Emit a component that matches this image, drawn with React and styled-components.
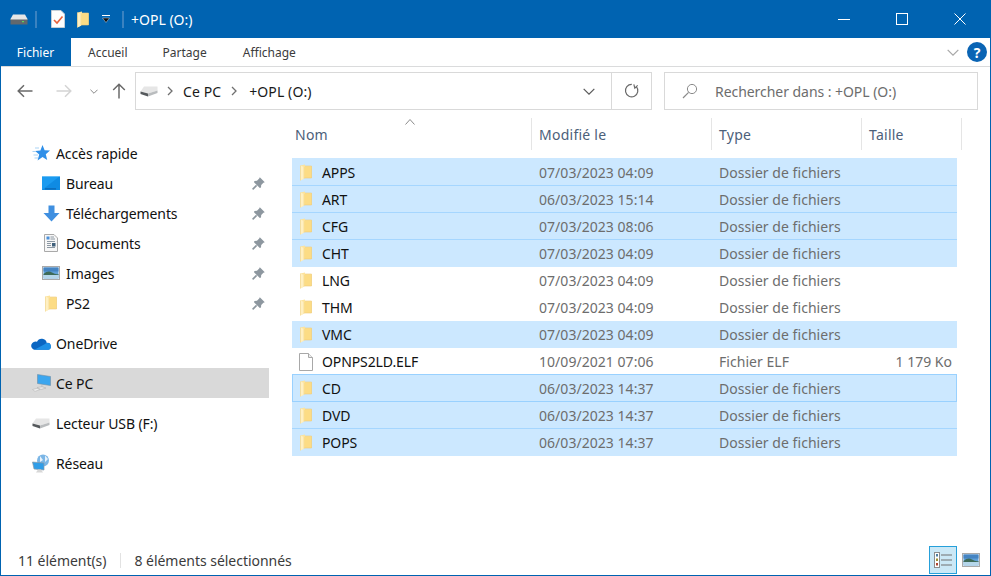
import React from "react";
import styled, { createGlobalStyle } from "styled-components";

const Global = createGlobalStyle`
  html, body { margin: 0; padding: 0; background: #fff; }
  * { box-sizing: border-box; }
`;

const FONT = `"Noto Sans", "Open Sans", sans-serif`;

/* ---------- icons ---------- */
const Folder = () => (
  <svg width="12" height="17" viewBox="0 0 12 17">
    <path d="M0.5 1.5 L5 0.5 V2 H11.5 V14 H4.5 L0.5 16.5 Z" fill="#fde39c" />
    <path d="M4.5 2.5 H11.5 V14 H4.5 Z" fill="#fcdc85" />
    <path d="M0.5 1.5 L4 3 V14.8 L0.5 16.5 Z" fill="#fff0c2" />
    <path d="M4 3 V14.8" stroke="#f3d587" strokeWidth="0.7" />
    <path d="M0.5 1.5 V16.5" stroke="#f0d48c" strokeWidth="0.6" />
    <path d="M5 2 H11.5 V14 H4.5" fill="none" stroke="#eecb78" strokeWidth="0.6" />
  </svg>
);

const Drive = () => (
  <svg width="18" height="11" viewBox="0 0 18 11">
    <path d="M3 0.5 H15 L17.5 5 H0.5 Z" fill="#e6e6e6" />
    <rect x="0.5" y="5" width="17" height="5.5" fill="#62686d" />
    <rect x="0.5" y="5" width="17" height="1" fill="#a2a6a8" />
    <rect x="12" y="7" width="2" height="1.2" fill="#5fd35f" />
  </svg>
);

const UsbDrive = () => (
  <svg width="18" height="11" viewBox="0 0 18 11">
    <path d="M4 0.5 H17.5 V4.5 L8 7.5 L0.5 5.5 Z" fill="#e6e6e6" />
    <path d="M0.5 5.5 L8 7.5 V10.5 L0.5 8 Z" fill="#55595c" />
    <path d="M8 7.5 L17.5 4.5 V7 L8 10.5 Z" fill="#b9bcbe" />
  </svg>
);

const Pin = () => (
  <svg width="13" height="13" viewBox="0 0 13 13">
    <path d="M7.8 0.2 L12.8 5.2 L11.4 5.8 L9.2 8 L9 10.6 L7.8 11 L2 5.2 L2.4 4 L5 3.8 L7.2 1.6 Z" fill="#8d979f" />
    <path d="M4.6 8.4 L0.6 12.4" stroke="#8d979f" strokeWidth="1.6" />
  </svg>
);

const Star = () => (
  <svg width="18" height="16" viewBox="0 0 18 16">
    <path d="M10.5 0 L12.6 5.2 L18 5.6 L13.8 9.2 L15.2 15 L10.5 12 L5.6 15.5 L7.2 9.4 L3.2 6 L8.4 5.4 Z" fill="#2f8fe8" />
    <path d="M3 3 H7 M0.5 6.5 H4 M1.5 10 H6 M2.5 13 H6" stroke="#a9d3f5" strokeWidth="1.2" />
  </svg>
);

const Desktop = () => (
  <svg width="18" height="14" viewBox="0 0 18 14">
    <rect width="18" height="14" fill="#1b9bf0" />
    <path d="M0 14 L18 0 V14 Z" fill="#0f8be3" />
    <rect y="12.4" x="3" width="11" height="1" fill="#0a5ea8" />
    <rect width="18" height="1" fill="#66bdf5" />
  </svg>
);

const DownArrow = () => (
  <svg width="17" height="17" viewBox="0 0 17 17">
    <path d="M5.5 0.5 H11.5 V8 H16.5 L8.5 16.5 L0.5 8 H5.5 Z" fill="#3f8fe0" />
  </svg>
);

const Doc = () => (
  <svg width="14" height="18" viewBox="0 0 14 18">
    <path d="M0.5 0.5 H10 L13.5 4 V17.5 H0.5 Z" fill="#f7f7f7" stroke="#a9a9a9" />
    <path d="M6.5 3 H10 M6.5 5 H11 M3 7.5 H11 M3 9.5 H7 M3 11.5 H7 M3 13.5 H11" stroke="#7f8c99" strokeWidth="0.9" />
    <rect x="2.5" y="2.5" width="3" height="3" fill="#4a90d9" />
    <rect x="8" y="9" width="3.5" height="3.5" fill="#41617c" />
  </svg>
);

const Picture = () => (
  <svg width="18" height="14" viewBox="0 0 18 14">
    <rect x="0.5" y="0.5" width="17" height="13" fill="#fff" stroke="#a9a9a9" />
    <rect x="1.5" y="1.5" width="15" height="11" fill="#5f9fd8" />
    <rect x="1.5" y="1.5" width="15" height="4" fill="#4584c2" />
    <path d="M1.5 8 Q6 4 10 6.5 T16.5 8 V9 H1.5 Z" fill="#3e6b58" />
    <rect x="1.5" y="9" width="15" height="3.5" fill="#b5d6ea" />
  </svg>
);

const Cloud = () => (
  <svg width="20" height="13" viewBox="0 0 20 13">
    <path d="M3 12.8 H17 A3 3 0 0 0 19.8 8.8 A3.4 3.4 0 0 0 15.8 5.9 A5.2 5.2 0 0 0 6 4.8 A4 4 0 0 0 3 12.8 Z" fill="#0a66c2" />
    <path d="M3.5 12.8 H17 A3 3 0 0 0 19.8 8.8 A3.4 3.4 0 0 0 14 7 L8 10.3 Z" fill="#1e90e6" />
  </svg>
);

const Computer = () => (
  <svg width="19" height="18" viewBox="0 0 19 18">
    <path d="M5.5 0.5 L18.5 2.5 V11.5 L5.5 9.5 Z" fill="#3ba6ef" stroke="#6f8ea6" strokeWidth="0.6" />
    <path d="M9 11 L12 12 L9 13.5 Z" fill="#c8c8c8" />
    <path d="M5 13.5 L10 12.8 L14 14 L9 15.5 Z" fill="#ebebeb" stroke="#b2b2b2" strokeWidth="0.6" />
    <path d="M0.5 15.5 L5 14.3 L8 15.5 L3 17.4 Z" fill="#ededed" stroke="#b9b9b9" strokeWidth="0.6" />
  </svg>
);

const Network = () => (
  <svg width="18" height="19" viewBox="0 0 18 19">
    <circle cx="11" cy="6.5" r="6" fill="#7bb6e6" />
    <path d="M8 2 L11 6 L8 8 Z M13 1.5 L16 5 L13 8 Z" fill="#e7f2fb" />
    <path d="M0.5 8 L12 9 V16 L2 15 Z" fill="#2f9de8" stroke="#8a9aa6" strokeWidth="0.7" />
    <path d="M4 18.5 H11 L9 15.5 H6 Z" fill="#d7d7d7" />
  </svg>
);

const BlankFile = () => (
  <svg width="14" height="18" viewBox="0 0 14 18">
    <path d="M0.5 0.5 H9.5 L13.5 4.5 V17.5 H0.5 Z" fill="#fff" stroke="#a8a8a8" />
    <path d="M9.5 0.5 V4.5 H13.5" fill="#eee" stroke="#a8a8a8" />
  </svg>
);

const Chevron = () => (
  <svg width="6" height="10" viewBox="0 0 6 10">
    <path d="M1 1 L5 5 L1 9" fill="none" stroke="#707070" strokeWidth="1.3" />
  </svg>
);

const Arrow = ({ color, rotate = 0 }) => (
  <svg width="16" height="14" viewBox="0 0 16 14" style={{ transform: `rotate(${rotate}deg)` }}>
    <path d="M15.5 7 H1.5 M7 1.2 L1.2 7 L7 12.8" fill="none" stroke={color} strokeWidth="1.5" />
  </svg>
);

const Caret = ({ w = 9, h = 5, color = "#707070" }) => (
  <svg width={w} height={h} viewBox="0 0 9 5">
    <path d="M0.5 0.5 L4.5 4.5 L8.5 0.5" fill="none" stroke={color} strokeWidth="0.9" />
  </svg>
);

/* ---------- title bar ---------- */
const Window = styled.div`
  width: 991px;
  height: 576px;
  display: flex;
  flex-direction: column;
  border: 1px solid #0063b1;
  border-top: none;
  font-family: ${FONT};
  background: #fff;
  overflow: hidden;
`;

const TitleBar = styled.div`
  height: 38px;
  flex: none;
  margin: 0 -1px;
  background: #0063b1;
  color: #fff;
  display: flex;
  align-items: center;
  padding-left: 10px;
`;

const TitleDivider = styled.span`
  width: 2px;
  height: 17px;
  margin: 0 ${(p) => p.$gap}px 0 ${(p) => p.$left}px;
  background: #3a82c0;
`;

const QuickIcon = styled.span`
  display: flex;
  margin-right: ${(p) => p.$gap}px;
`;

const TitleText = styled.span`
  font-size: 14px;
`;

const WindowButtons = styled.div`
  margin-left: auto;
  display: flex;
  align-items: center;
  height: 100%;
  padding-right: 2px;
`;

const WindowButton = styled.span`
  width: 58px;
  height: 38px;
  display: flex;
  align-items: center;
  justify-content: center;
`;

/* ---------- ribbon ---------- */
const RibbonTabs = styled.div`
  height: 29px;
  flex: none;
  display: flex;
  align-items: center;
  border-bottom: 1px solid #dadbdc;
  font-size: 12px;
`;

const FileTab = styled.div`
  width: 71px;
  height: 28px;
  margin-left: -1px;
  background: #0063b1;
  color: #fff;
  display: flex;
  align-items: center;
  justify-content: center;
  align-self: flex-start;
`;

const RibbonTab = styled.div`
  margin-left: ${(p) => p.$left}px;
  color: #3b3b3b;
`;

const RibbonRight = styled.div`
  margin-left: auto;
  display: flex;
  align-items: center;
  gap: 8px;
  padding-right: 3px;
`;

const HelpBadge = styled.span`
  width: 20px;
  height: 20px;
  border-radius: 50%;
  background: #0a64b4;
  color: #fff;
  font-size: 14px;
  font-weight: 700;
  display: flex;
  align-items: center;
  justify-content: center;
`;

/* ---------- address row ---------- */
const AddressRow = styled.div`
  height: 44px;
  flex: none;
  display: flex;
  align-items: flex-start;
  padding-top: 5px;
`;

const NavButtons = styled.div`
  width: 134px;
  height: 38px;
  display: flex;
  align-items: center;
  padding-left: 16px;
`;

const NavSlot = styled.span`
  display: flex;
  margin-left: ${(p) => p.$left || 0}px;
`;

const FieldBox = styled.div`
  height: 38px;
  border: 1px solid #d9d9d9;
  display: flex;
  align-items: center;
  font-size: 14px;
`;

const AddressBox = styled(FieldBox)`
  width: 517px;
  padding-left: 4px;
  color: #1a1a1a;
`;

const Crumb = styled.span`
  margin-left: ${(p) => p.$left}px;
  letter-spacing: 0.1px;
`;

const CrumbChevron = styled.span`
  display: flex;
  margin-left: ${(p) => p.$left}px;
`;

const AddressEnd = styled.div`
  margin-left: auto;
  height: 100%;
  display: flex;
  align-items: center;
`;

const RefreshSlot = styled.span`
  width: 40px;
  height: 100%;
  border-left: 1px solid #d9d9d9;
  margin-left: 16px;
  display: flex;
  align-items: center;
  justify-content: center;
`;

const SearchBox = styled(FieldBox)`
  width: 314px;
  margin-left: 12px;
  padding-left: 17px;
  color: #6d6d6d;
`;

const SearchText = styled.span`
  margin-left: 17px;
  letter-spacing: -0.05px;
`;

/* ---------- body ---------- */
const Body = styled.div`
  flex: 1;
  display: flex;
  min-height: 0;
`;

const Sidebar = styled.nav`
  width: 268px;
  flex: none;
  padding-top: 27px;
`;

const NavGroup = styled.div`
  margin-bottom: 10px;
`;

const NavRow = styled.div`
  height: 30px;
  display: flex;
  align-items: center;
  padding-left: ${(p) => (p.$child ? 40 : 30)}px;
  padding-right: 3px;
  background: ${(p) => (p.$selected ? "#d9d9d9" : "transparent")};
  font-size: 14px;
  letter-spacing: -0.1px;
  color: #111;
`;

const NavIcon = styled.span`
  width: 20px;
  height: 20px;
  margin-right: 5px;
  display: flex;
  align-items: center;
  justify-content: center;
  flex: none;
`;

const NavPin = styled.span`
  margin-left: auto;
  margin-right: 1px;
  display: flex;
`;

const Content = styled.main`
  flex: 1;
  padding-left: 23px;
  position: relative;
`;

const Header = styled.div`
  display: grid;
  grid-template-columns: 240px 180px 150px 100px;
  height: 32px;
  margin-top: 7px;
  margin-bottom: 8px;
  font-size: 14px;
  color: #4c607a;
`;

const HeaderCell = styled.div`
  display: flex;
  align-items: center;
  padding-left: ${(p) => p.$pad}px;
  border-right: 1px solid #e5e5e5;
  letter-spacing: 0.25px;
`;

const SortCaret = styled.span`
  position: absolute;
  left: 136px;
  top: 8px;
  display: flex;
`;

const FileList = styled.div`
  width: 665px;
  & > :first-child {
    height: 28px;
    padding-top: 1px;
  }
`;

const FileRow = styled.div`
  display: grid;
  grid-template-columns: 240px 180px 150px 95px;
  height: ${(p) => (p.$focused ? 28 : 27)}px;
  margin-top: ${(p) => (p.$focused ? -1 : 0)}px;
  align-items: center;
  font-size: 14px;
  background: ${(p) => (p.$selected ? "#cce8ff" : "transparent")};
  border-bottom: ${(p) => (p.$selected && !p.$last ? "1px solid #a5d6ff" : "none")};
  box-shadow: ${(p) => (p.$focused ? "inset 0 0 0 1px #99d1ff" : "none")};
`;

const NameCell = styled.div`
  display: flex;
  align-items: center;
  padding-left: 6px;
  color: #111;
  letter-spacing: -0.1px;
`;

const NameIcon = styled.span`
  width: 16px;
  display: flex;
  justify-content: center;
  margin-right: 8px;
`;

const MetaCell = styled.div`
  padding-left: 7px;
  color: #6d6d6d;
  letter-spacing: 0.04px;
`;

const SizeCell = styled.div`
  text-align: right;
  padding-right: 5px;
  color: #6d6d6d;
`;

/* ---------- status bar ---------- */
const StatusBar = styled.footer`
  height: 30px;
  flex: none;
  display: flex;
  align-items: center;
  padding-left: 17px;
  font-size: 14px;
  letter-spacing: -0.03px;
  color: #3b3b3b;
`;

const StatusDivider = styled.span`
  width: 1px;
  height: 15px;
  background: #e2e2e2;
  margin: 0 13px 0 14px;
`;

const ViewButtons = styled.div`
  margin-left: auto;
  display: flex;
  align-items: center;
  padding-right: 5px;
  height: 100%;
`;

const ViewButton = styled.span`
  width: 28px;
  height: 28px;
  display: flex;
  align-items: center;
  justify-content: center;
  border: 1px solid ${(p) => (p.$active ? "#26a0da" : "transparent")};
  background: ${(p) => (p.$active ? "#cbe8f6" : "transparent")};
`;

const quick = [
  ["Bureau", <Desktop />],
  ["Téléchargements", <DownArrow />],
  ["Documents", <Doc />],
  ["Images", <Picture />],
  ["PS2", <Folder />],
];

const files = [
  { name: "APPS", date: "07/03/2023 04:09", selected: true },
  { name: "ART", date: "06/03/2023 15:14", selected: true },
  { name: "CFG", date: "07/03/2023 08:06", selected: true },
  { name: "CHT", date: "07/03/2023 04:09", selected: true, last: true },
  { name: "LNG", date: "07/03/2023 04:09" },
  { name: "THM", date: "07/03/2023 04:09" },
  { name: "VMC", date: "07/03/2023 04:09", selected: true, last: true },
  { name: "OPNPS2LD.ELF", date: "10/09/2021 07:06", type: "Fichier ELF", size: "1 179 Ko" },
  { name: "CD", date: "06/03/2023 14:37", selected: true, focused: true, last: true },
  { name: "DVD", date: "06/03/2023 14:37", selected: true },
  { name: "POPS", date: "06/03/2023 14:37", selected: true, last: true },
];

export default function App() {
  return (
    <>
      <Global />
      <Window>
        <TitleBar>
          <QuickIcon $gap={0}><Drive /></QuickIcon>
          <TitleDivider $left={7} $gap={14} />
          <QuickIcon $gap={12}>
            <svg width="14" height="18" viewBox="0 0 14 18">
              <path d="M0.5 0.5 H10 L13.5 4 V17.5 H0.5 Z" fill="#fdfdfd" stroke="#c4cdd6" />
              <path d="M3 10 L6 13 L11.5 6.5" fill="none" stroke="#e8603a" strokeWidth="1.6" />
            </svg>
          </QuickIcon>
          <QuickIcon $gap={13}><Folder /></QuickIcon>
          <QuickIcon $gap={0}>
            <svg width="8" height="8" viewBox="0 0 8 8">
              <rect y="0" width="8" height="1" fill="#fff" />
              <path d="M0.5 3 H7.5 L4 7.5 Z" fill="#111" stroke="#fff" strokeWidth="0.4" />
            </svg>
          </QuickIcon>
          <TitleDivider $left={12} $gap={7} />
          <TitleText>+OPL (O:)</TitleText>
          <WindowButtons>
            <WindowButton>
              <svg width="12" height="12" viewBox="0 0 12 12"><path d="M0 6.5 H12" stroke="#fff" /></svg>
            </WindowButton>
            <WindowButton>
              <svg width="12" height="12" viewBox="0 0 12 12"><rect x="0.5" y="0.5" width="11" height="11" fill="none" stroke="#fff" /></svg>
            </WindowButton>
            <WindowButton>
              <svg width="12" height="12" viewBox="0 0 12 12"><path d="M0.5 0.5 L11.5 11.5 M11.5 0.5 L0.5 11.5" stroke="#fff" /></svg>
            </WindowButton>
          </WindowButtons>
        </TitleBar>

        <RibbonTabs>
          <FileTab>Fichier</FileTab>
          <RibbonTab $left={17}>Accueil</RibbonTab>
          <RibbonTab $left={35}>Partage</RibbonTab>
          <RibbonTab $left={36}>Affichage</RibbonTab>
          <RibbonRight>
            <Caret w={12} h={7} color="#a8a8a8" />
            <HelpBadge>?</HelpBadge>
          </RibbonRight>
        </RibbonTabs>

        <AddressRow>
          <NavButtons>
            <NavSlot><Arrow color="#6a6a6a" /></NavSlot>
            <NavSlot $left={23}><Arrow color="#d4d4d4" rotate={180} /></NavSlot>
            <NavSlot $left={18}><Caret w={8} h={5} color="#6a6a6a" /></NavSlot>
            <NavSlot $left={13}><Arrow color="#6a6a6a" rotate={90} /></NavSlot>
          </NavButtons>
          <AddressBox>
            <UsbDrive />
            <CrumbChevron $left={9}><Chevron /></CrumbChevron>
            <Crumb $left={10}>Ce PC</Crumb>
            <CrumbChevron $left={10}><Chevron /></CrumbChevron>
            <Crumb $left={12}>+OPL (O:)</Crumb>
            <AddressEnd>
              <Caret w={12} h={7} color="#5a5a5a" />
              <RefreshSlot>
                <svg width="16" height="16" viewBox="0 0 16 16">
                  <path d="M3.2 3.5 A6.2 6.2 0 1 0 8 1.8 M8 0 L8 4 L4.6 2" fill="none" stroke="#6a6a6a" strokeWidth="1.2" transform="rotate(45 8 8)" />
                </svg>
              </RefreshSlot>
            </AddressEnd>
          </AddressBox>
          <SearchBox>
            <svg width="16" height="16" viewBox="0 0 16 16">
              <circle cx="10" cy="6" r="4.6" fill="none" stroke="#8a8a8a" />
              <path d="M6.6 9.4 L1 15" stroke="#8a8a8a" strokeWidth="1.2" />
            </svg>
            <SearchText>Rechercher dans : +OPL (O:)</SearchText>
          </SearchBox>
        </AddressRow>

        <Body>
          <Sidebar>
            <NavGroup>
              <NavRow>
                <NavIcon><Star /></NavIcon>Accès rapide
              </NavRow>
              {quick.map(([label, icon]) => (
                <NavRow key={label} $child>
                  <NavIcon>{icon}</NavIcon>
                  {label}
                  <NavPin><Pin /></NavPin>
                </NavRow>
              ))}
            </NavGroup>
            <NavGroup>
              <NavRow><NavIcon><Cloud /></NavIcon>OneDrive</NavRow>
            </NavGroup>
            <NavGroup>
              <NavRow $selected><NavIcon><Computer /></NavIcon>Ce PC</NavRow>
            </NavGroup>
            <NavGroup>
              <NavRow><NavIcon><UsbDrive /></NavIcon>Lecteur USB (F:)</NavRow>
            </NavGroup>
            <NavGroup>
              <NavRow><NavIcon><Network /></NavIcon>Réseau</NavRow>
            </NavGroup>
          </Sidebar>

          <Content>
            <SortCaret>
              <svg width="10" height="6" viewBox="0 0 10 6">
                <path d="M0.5 5.5 L5 0.5 L9.5 5.5" fill="none" stroke="#8a8a8a" />
              </svg>
            </SortCaret>
            <Header>
              <HeaderCell $pad={3}>Nom</HeaderCell>
              <HeaderCell $pad={7}>Modifié le</HeaderCell>
              <HeaderCell $pad={7}>Type</HeaderCell>
              <HeaderCell $pad={7}>Taille</HeaderCell>
            </Header>
            <FileList>
              {files.map((f) => (
                <FileRow key={f.name} $selected={f.selected} $last={f.last} $focused={f.focused}>
                  <NameCell>
                    <NameIcon>{f.type ? <BlankFile /> : <Folder />}</NameIcon>
                    {f.name}
                  </NameCell>
                  <MetaCell>{f.date}</MetaCell>
                  <MetaCell>{f.type || "Dossier de fichiers"}</MetaCell>
                  <SizeCell>{f.size}</SizeCell>
                </FileRow>
              ))}
            </FileList>
          </Content>
        </Body>

        <StatusBar>
          11 élément(s)
          <StatusDivider />
          8 éléments sélectionnés
          <ViewButtons>
            <ViewButton $active>
              <svg width="18" height="16" viewBox="0 0 18 16">
                <rect x="0.5" y="0.5" width="5" height="15" fill="#fff" stroke="#8c8c8c" />
                <rect x="2" y="2" width="2" height="2.5" fill="#4f7f9f" />
                <rect x="2" y="6.5" width="2" height="2.5" fill="#a0902f" />
                <rect x="2" y="11" width="2" height="2.5" fill="#b0452f" />
                <path d="M7 3 H18 M7 8 H18 M7 13 H18" stroke="#707070" />
              </svg>
            </ViewButton>
            <ViewButton><Picture /></ViewButton>
          </ViewButtons>
        </StatusBar>
      </Window>
    </>
  );
}
